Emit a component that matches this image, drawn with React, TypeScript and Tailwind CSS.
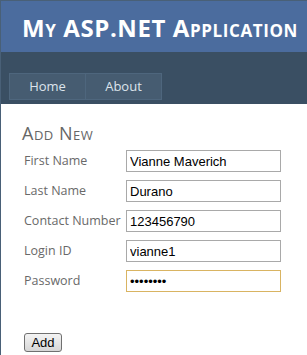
import React from "react";

const fields = [
  { label: "First Name", value: "Vianne Maverich", type: "text" },
  { label: "Last Name", value: "Durano", type: "text" },
  { label: "Contact Number", value: "123456790", type: "text" },
  { label: "Login ID", value: "vianne1", type: "text" },
  { label: "Password", value: "12345678", type: "password" },
];

const App = () => {
  return (
    <div className="w-[307px] h-[355px] overflow-hidden bg-white border-l border-t border-[#496077] font-['Open_Sans',sans-serif]">
      {/* header */}
      <div className="h-[51px] bg-[#4b6c9e] pl-[21px] pt-[12px]">
        <h1 className="text-white font-bold text-[24px] leading-[30px] tracking-[0.6px] whitespace-nowrap [font-variant:small-caps]">
          My ASP.NET Application
        </h1>
      </div>

      {/* menu band */}
      <div className="h-[52px] bg-[#3a4f63] pl-[8px] pt-[21px]">
        <ul className="flex">
          {["Home", "About"].map((item, i) => (
            <li
              key={item}
              className={
                "w-[77px] h-[27px] flex items-center justify-center bg-[#465c71] border border-[#4e667d] text-[#dde4ec] text-[13px] " +
                (i > 0 ? "-ml-px" : "")
              }
            >
              {item}
            </li>
          ))}
        </ul>
      </div>

      {/* main */}
      <div className="pl-[21px] pt-[18px]">
        <h2 className="text-[#666666] text-[18px] leading-[22px] tracking-[0.5px] [font-variant:small-caps]">
          Add New
        </h2>
        <div className="mt-[6px] flex flex-col gap-[8px]">
          {fields.map((f) => (
            <div key={f.label} className="flex items-center h-[22px]">
              <label className="w-[104px] pl-[2px] text-[12.5px] text-[#696969] whitespace-nowrap">
                {f.label}
              </label>
              <input
                type={f.type}
                defaultValue={f.value}
                className={
                  "w-[155px] h-[22px] px-[3px] text-[13px] text-black font-['Liberation_Sans',Arial,sans-serif] bg-white outline-none border " +
                  (f.type === "password" ? "border-[#d9b462]" : "border-[#a9a9a9]")
                }
              />
            </div>
          ))}
        </div>
        <button className="mt-[41px] ml-[2px] w-[38px] h-[19px] rounded-[3px] border border-[#707070] bg-gradient-to-b from-[#f4f4f4] to-[#d6d6d6] text-[13px] leading-none text-black font-['Liberation_Sans',Arial,sans-serif]">
          Add
        </button>
      </div>
    </div>
  );
};

export default App;
